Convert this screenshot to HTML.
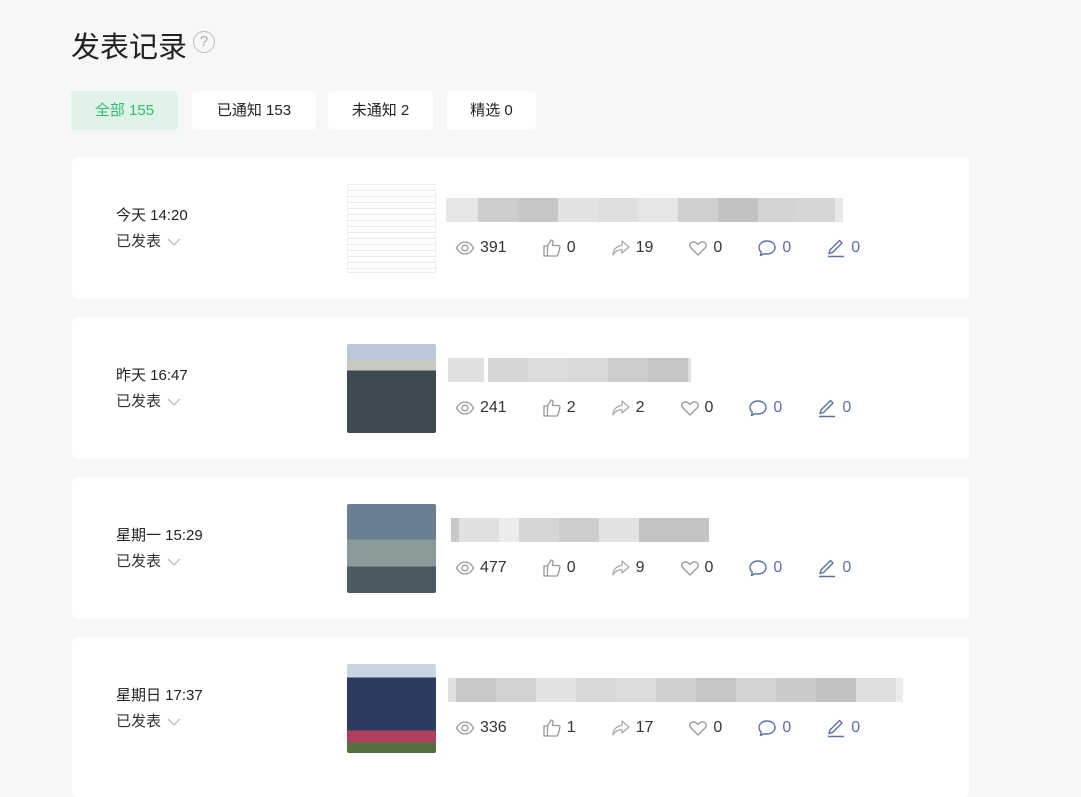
<!DOCTYPE html>
<html><head><meta charset="utf-8"><style>
*{margin:0;padding:0;box-sizing:border-box}
body{width:1081px;height:776px;overflow:hidden;background:#f6f7f9;font-family:"Liberation Sans","Noto Sans CJK SC",sans-serif;color:#333;position:relative}
h1{position:absolute;left:71px;top:24px;font-size:29px;font-weight:normal;color:#222;letter-spacing:0}
.q{position:absolute;left:193px;top:31px;width:22px;height:22px;border:1.5px solid #bbb;border-radius:50%;color:#aaa;font-size:15px;text-align:center;line-height:19px}
.tab{position:absolute;top:91px;height:39px;background:#fff;border-radius:4px;font-size:15px;line-height:39px;text-align:center;color:#222}
.card{position:absolute;left:72px;width:897px;height:142px;background:#fff;border-radius:6px}
.date{position:absolute;left:44px;top:49px;font-size:15px;color:#222;line-height:20px}
.st{position:absolute;left:44px;top:75px;font-size:15px;color:#333;line-height:20px}
.st svg{vertical-align:middle;margin-left:6px}
.thumb{position:absolute;left:275px;top:27px;width:89px;height:89px;border-radius:2px}
.bar{position:absolute;top:41px;height:24px;display:flex}
.bar i{display:block;height:100%}
.stats{position:absolute;left:383px;top:81px;display:flex;align-items:center;font-size:16px;color:#333}
.stats span{display:flex;align-items:center;margin-right:35px}
.stats svg{margin-right:5px}
.stats .b{color:#5a6ea8}
</style></head><body>
<h1>发表记录</h1><div class="q">?</div>
<div class="tab" style="left:71px;width:107px;background:#dff3e8;color:#2fbf6c">全部 155</div>
<div class="tab" style="left:192px;width:124px">已通知 153</div>
<div class="tab" style="left:328px;width:105px">未通知 2</div>
<div class="tab" style="left:447px;width:89px">精选 0</div>

<svg width="0" height="0" style="position:absolute">
<symbol id="eye" viewBox="0 0 20 20"><path d="M1.5 10C4 5.5 7 4 10 4s6 1.5 8.5 6C16 14.5 13 16 10 16S4 14.5 1.5 10z" fill="none" stroke="#999" stroke-width="1.3"/><circle cx="10" cy="10" r="3" fill="none" stroke="#999" stroke-width="1.3"/></symbol>
<symbol id="like" viewBox="0 0 20 20"><path d="M2 8h3.5v10H2zM5.5 8l3.5-6c1.5 0 2.3 1 2 2.5L10.5 7.5H16.5c1 0 1.7 1 1.4 2l-1.8 7c-.3 1-1 1.5-2 1.5H5.5" fill="none" stroke="#999" stroke-width="1.3" stroke-linejoin="round"/></symbol>
<symbol id="share" viewBox="0 0 20 20"><path d="M11 3l7 6-7 6v-3.5C6.5 11.5 4 13.5 2 17c.5-5.5 3.5-9 9-9.5z" fill="none" stroke="#aaa" stroke-width="1.3" stroke-linejoin="round"/></symbol>
<symbol id="heart" viewBox="0 0 20 20"><path d="M10 17L3 10C1 8 1.5 4.5 4.5 4 6.5 3.7 8.5 4.8 10 6.5 11.5 4.8 13.5 3.7 15.5 4c3 .5 3.5 4 1.5 6z" fill="none" stroke="#999" stroke-width="1.3" stroke-linejoin="round"/></symbol>
<symbol id="cmt" viewBox="0 0 20 20"><path d="M10 3c4.5 0 8 2.8 8 6.5S14.5 16 10 16c-1 0-2-.1-2.8-.4L3.5 17.5l.8-3.3C2.8 13 2 11.3 2 9.5 2 5.8 5.5 3 10 3z" fill="none" stroke="#5a6ea8" stroke-width="1.4" stroke-linejoin="round"/></symbol>
<symbol id="pen" viewBox="0 0 20 20"><path d="M3 15.5l1-3.5L13.5 2.5l2.5 2.5L6.5 14.5zM2 18.5h16" fill="none" stroke="#5a6ea8" stroke-width="1.4" stroke-linejoin="round"/></symbol>
</svg>

<div class="card" style="top:157px">
<div class="date">今天 14:20</div><div class="st">已发表<svg width="14" height="10" viewBox="0 0 14 10"><path d="M1 2l6 6 6-6" fill="none" stroke="#bbb" stroke-width="1.3"/></svg></div>
<div class="thumb" style="background:repeating-linear-gradient(#fff 0 5px,#e8e8e8 5px 6px),#fff;border:1px solid #eee"></div>
<div class="bar" style="left:374px"><i style="width:32px;background:#e6e6e6"></i><i style="width:40px;background:#cdcdcd"></i><i style="width:40px;background:#c6c6c6"></i><i style="width:40px;background:#e2e2e2"></i><i style="width:40px;background:#dedede"></i><i style="width:40px;background:#e6e6e6"></i><i style="width:40px;background:#cfcfcf"></i><i style="width:40px;background:#c2c2c2"></i><i style="width:37px;background:#d4d4d4"></i><i style="width:40px;background:#d6d6d6"></i><i style="width:8px;background:#e8e8e8"></i></div>
<div class="stats"><span><svg width="20" height="20"><use href="#eye"/></svg>391</span><span><svg width="20" height="20"><use href="#like"/></svg>0</span><span><svg width="20" height="20"><use href="#share"/></svg>19</span><span><svg width="20" height="20"><use href="#heart"/></svg>0</span><span class="b"><svg width="20" height="20"><use href="#cmt"/></svg>0</span><span class="b"><svg width="20" height="20"><use href="#pen"/></svg>0</span></div>
</div>

<div class="card" style="top:317px">
<div class="date">昨天 16:47</div><div class="st">已发表<svg width="14" height="10" viewBox="0 0 14 10"><path d="M1 2l6 6 6-6" fill="none" stroke="#bbb" stroke-width="1.3"/></svg></div>
<div class="thumb" style="background:linear-gradient(#b8c8d8 0 18%,#c8c8c0 18% 30%,#3e4a52 30% 100%)"></div>
<div class="bar" style="left:376px"><i style="width:36px;background:#e0e0e0"></i><i style="width:4px;background:#fff"></i><i style="width:40px;background:#d6d6d4"></i><i style="width:40px;background:#dcdcdc"></i><i style="width:40px;background:#d9d9d9"></i><i style="width:40px;background:#cccccc"></i><i style="width:40px;background:#c6c6c6"></i><i style="width:3px;background:#e0e0e0"></i></div>
<div class="stats"><span><svg width="20" height="20"><use href="#eye"/></svg>241</span><span><svg width="20" height="20"><use href="#like"/></svg>2</span><span><svg width="20" height="20"><use href="#share"/></svg>2</span><span><svg width="20" height="20"><use href="#heart"/></svg>0</span><span class="b"><svg width="20" height="20"><use href="#cmt"/></svg>0</span><span class="b"><svg width="20" height="20"><use href="#pen"/></svg>0</span></div>
</div>

<div class="card" style="top:477px">
<div class="date">星期一 15:29</div><div class="st">已发表<svg width="14" height="10" viewBox="0 0 14 10"><path d="M1 2l6 6 6-6" fill="none" stroke="#bbb" stroke-width="1.3"/></svg></div>
<div class="thumb" style="background:linear-gradient(#6a8090 0 40%,#8a9a98 40% 70%,#4a5a60 70%)"></div>
<div class="bar" style="left:379px"><i style="width:8px;background:#c8c8c8"></i><i style="width:40px;background:#e0e0e0"></i><i style="width:20px;background:#ececec"></i><i style="width:40px;background:#d6d6d6"></i><i style="width:40px;background:#cdcdcd"></i><i style="width:40px;background:#e2e2e2"></i><i style="width:70px;background:#c4c4c4"></i></div>
<div class="stats"><span><svg width="20" height="20"><use href="#eye"/></svg>477</span><span><svg width="20" height="20"><use href="#like"/></svg>0</span><span><svg width="20" height="20"><use href="#share"/></svg>9</span><span><svg width="20" height="20"><use href="#heart"/></svg>0</span><span class="b"><svg width="20" height="20"><use href="#cmt"/></svg>0</span><span class="b"><svg width="20" height="20"><use href="#pen"/></svg>0</span></div>
</div>

<div class="card" style="top:637px;height:160px">
<div class="date">星期日 17:37</div><div class="st">已发表<svg width="14" height="10" viewBox="0 0 14 10"><path d="M1 2l6 6 6-6" fill="none" stroke="#bbb" stroke-width="1.3"/></svg></div>
<div class="thumb" style="background:linear-gradient(#c8d4e0 0 15%,#2c3c60 15% 75%,#b04060 75% 88%,#557040 88%)"></div>
<div class="bar" style="left:376px"><i style="width:8px;background:#e0e0e0"></i><i style="width:40px;background:#c8c8c8"></i><i style="width:40px;background:#d2d2d2"></i><i style="width:40px;background:#e2e2e2"></i><i style="width:40px;background:#d8d8d8"></i><i style="width:40px;background:#dcdcdc"></i><i style="width:40px;background:#d0d0d0"></i><i style="width:40px;background:#c6c6c6"></i><i style="width:40px;background:#d4d4d4"></i><i style="width:40px;background:#cacaca"></i><i style="width:40px;background:#c2c2c2"></i><i style="width:40px;background:#dedede"></i><i style="width:7px;background:#ececec"></i></div>
<div class="stats"><span><svg width="20" height="20"><use href="#eye"/></svg>336</span><span><svg width="20" height="20"><use href="#like"/></svg>1</span><span><svg width="20" height="20"><use href="#share"/></svg>17</span><span><svg width="20" height="20"><use href="#heart"/></svg>0</span><span class="b"><svg width="20" height="20"><use href="#cmt"/></svg>0</span><span class="b"><svg width="20" height="20"><use href="#pen"/></svg>0</span></div>
</div>
</body></html>
